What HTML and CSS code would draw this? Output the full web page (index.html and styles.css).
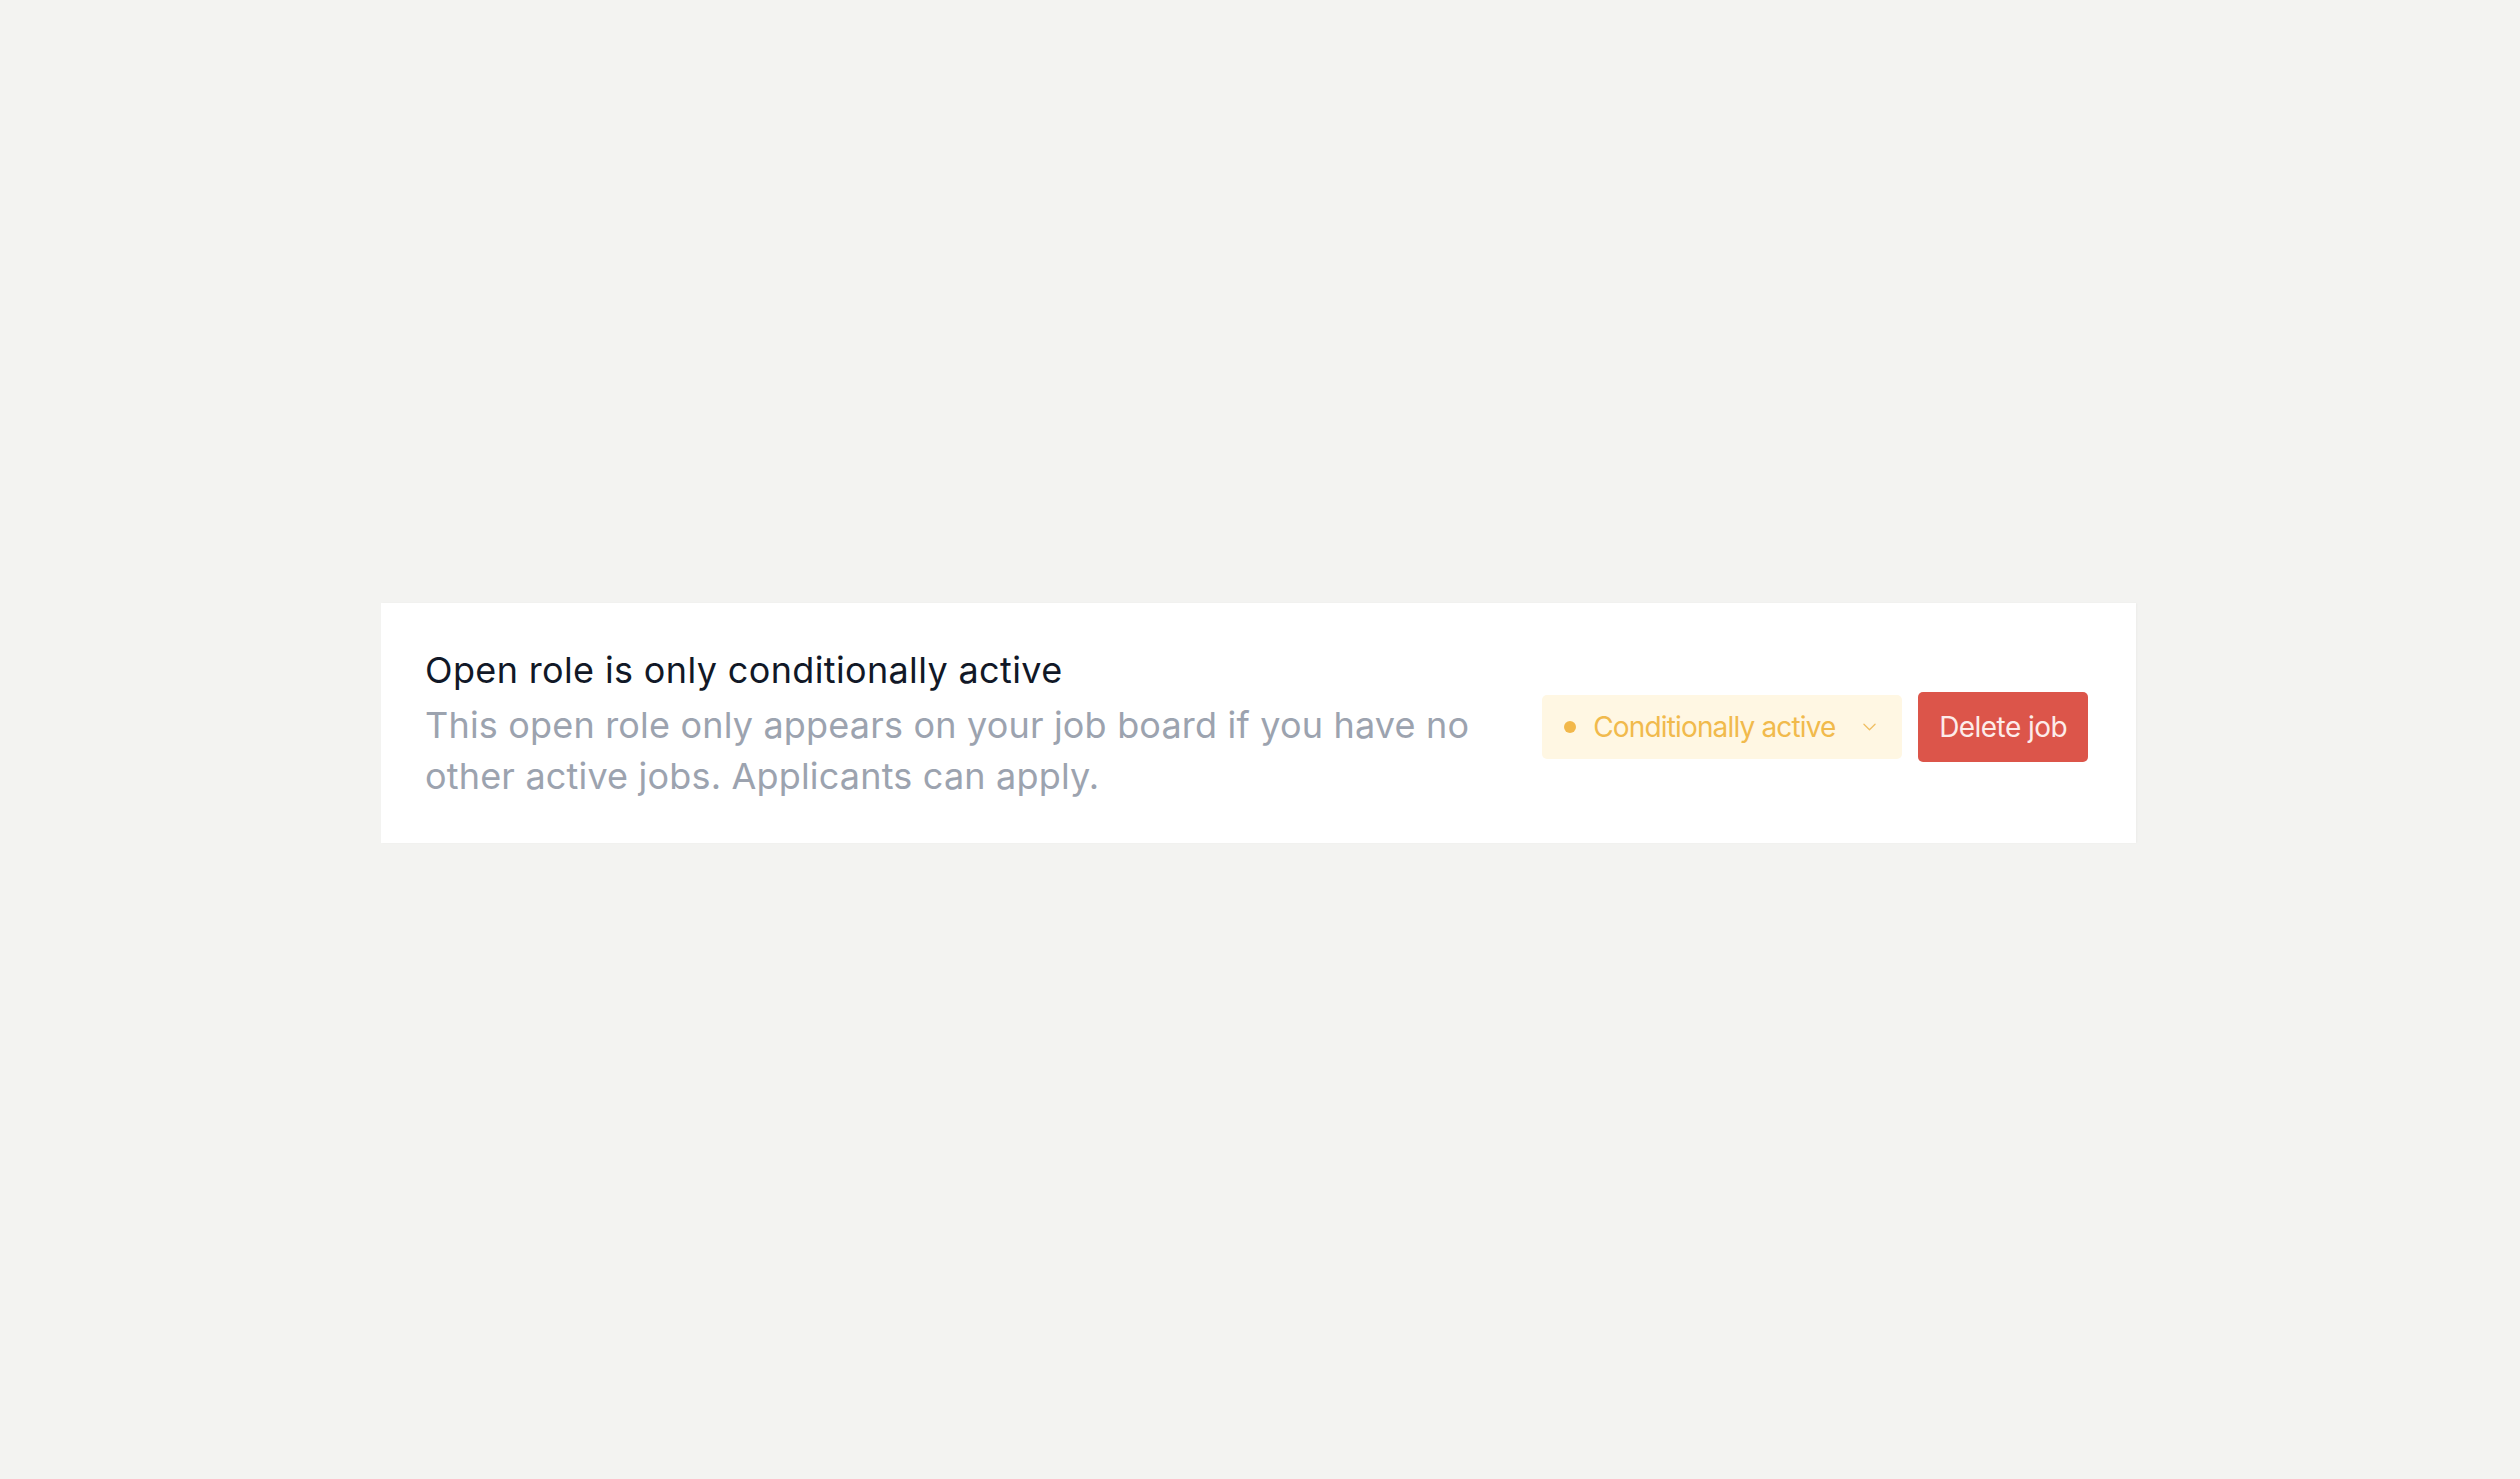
FILE: index.html
```html
<!DOCTYPE html>
<html lang="en">
<head>
<meta charset="utf-8">
<title>Open role</title>
<link rel="stylesheet" href="styles.css">
</head>
<body>
<main class="page">
  <section class="card">
    <div class="card-text">
      <h2 class="card-title">Open role is only conditionally active</h2>
      <p class="card-desc">This open role only appears on your job board if you have no other active jobs. Applicants can apply.</p>
    </div>
    <div class="card-actions">
      <button class="status-select" type="button">
        <span class="status-dot"></span>
        <span class="status-label">Conditionally active</span>
        <svg class="status-chevron" viewBox="0 0 14 8" width="13" height="8" aria-hidden="true"><path d="M1 1l6 6 6-6" fill="none" stroke="currentColor" stroke-width="1.4" stroke-linecap="round" stroke-linejoin="round"/></svg>
      </button>
      <button class="delete-btn" type="button">Delete job</button>
    </div>
  </section>
</main>
</body>
</html>
```

FILE: styles.css
```css
html, body {
  margin: 0;
  padding: 0;
}
body {
  background: #f3f3f1;
  font-family: Inter, "Noto Sans", "Liberation Sans", sans-serif;
  min-height: 1479px;
}
.page {
  display: flex;
  justify-content: center;
  padding-top: 603px;
  padding-right: 3px;
}
.card {
  box-sizing: border-box;
  width: 1755px;
  background: #ffffff;
  display: flex;
  align-items: center;
  justify-content: space-between;
  padding: 42px 48px 41px 44px;
  box-shadow: 1px 0 2px rgba(0,0,0,0.03);
}
.card-text {
  width: 1100px;
}
.card-title {
  margin: 0 0 5px 0;
  font-size: 36px;
  line-height: 50px;
  font-weight: 400;
  color: #111827;
  letter-spacing: 0.01em;
}
.card-desc {
  margin: 0;
  font-size: 36px;
  line-height: 51px;
  color: #9ca3af;
  letter-spacing: 0.005em;
}
.card-actions {
  display: flex;
  align-items: center;
  gap: 16px;
  margin-top: 6px;
}
.status-select {
  display: flex;
  align-items: center;
  height: 64px;
  width: 360px;
  box-sizing: border-box;
  padding: 0 26px 0 22px;
  border: none;
  border-radius: 5px;
  background: #fff7e3;
  color: #f1ba4c;
  font-family: inherit;
  font-size: 28px;
  letter-spacing: -0.03em;
  cursor: pointer;
}
.status-dot {
  width: 12px;
  height: 12px;
  border-radius: 50%;
  background: #f2b84b;
  margin-right: 17px;
  flex: none;
}
.status-label {
  flex: 1;
  text-align: left;
}
.status-chevron {
  flex: none;
  color: #f0bf63;
}
.delete-btn {
  height: 70px;
  padding: 0 21px;
  border: none;
  border-radius: 5px;
  background: #dc554a;
  color: #fdecea;
  font-family: inherit;
  font-size: 28px;
  letter-spacing: -0.02em;
  cursor: pointer;
}
```
